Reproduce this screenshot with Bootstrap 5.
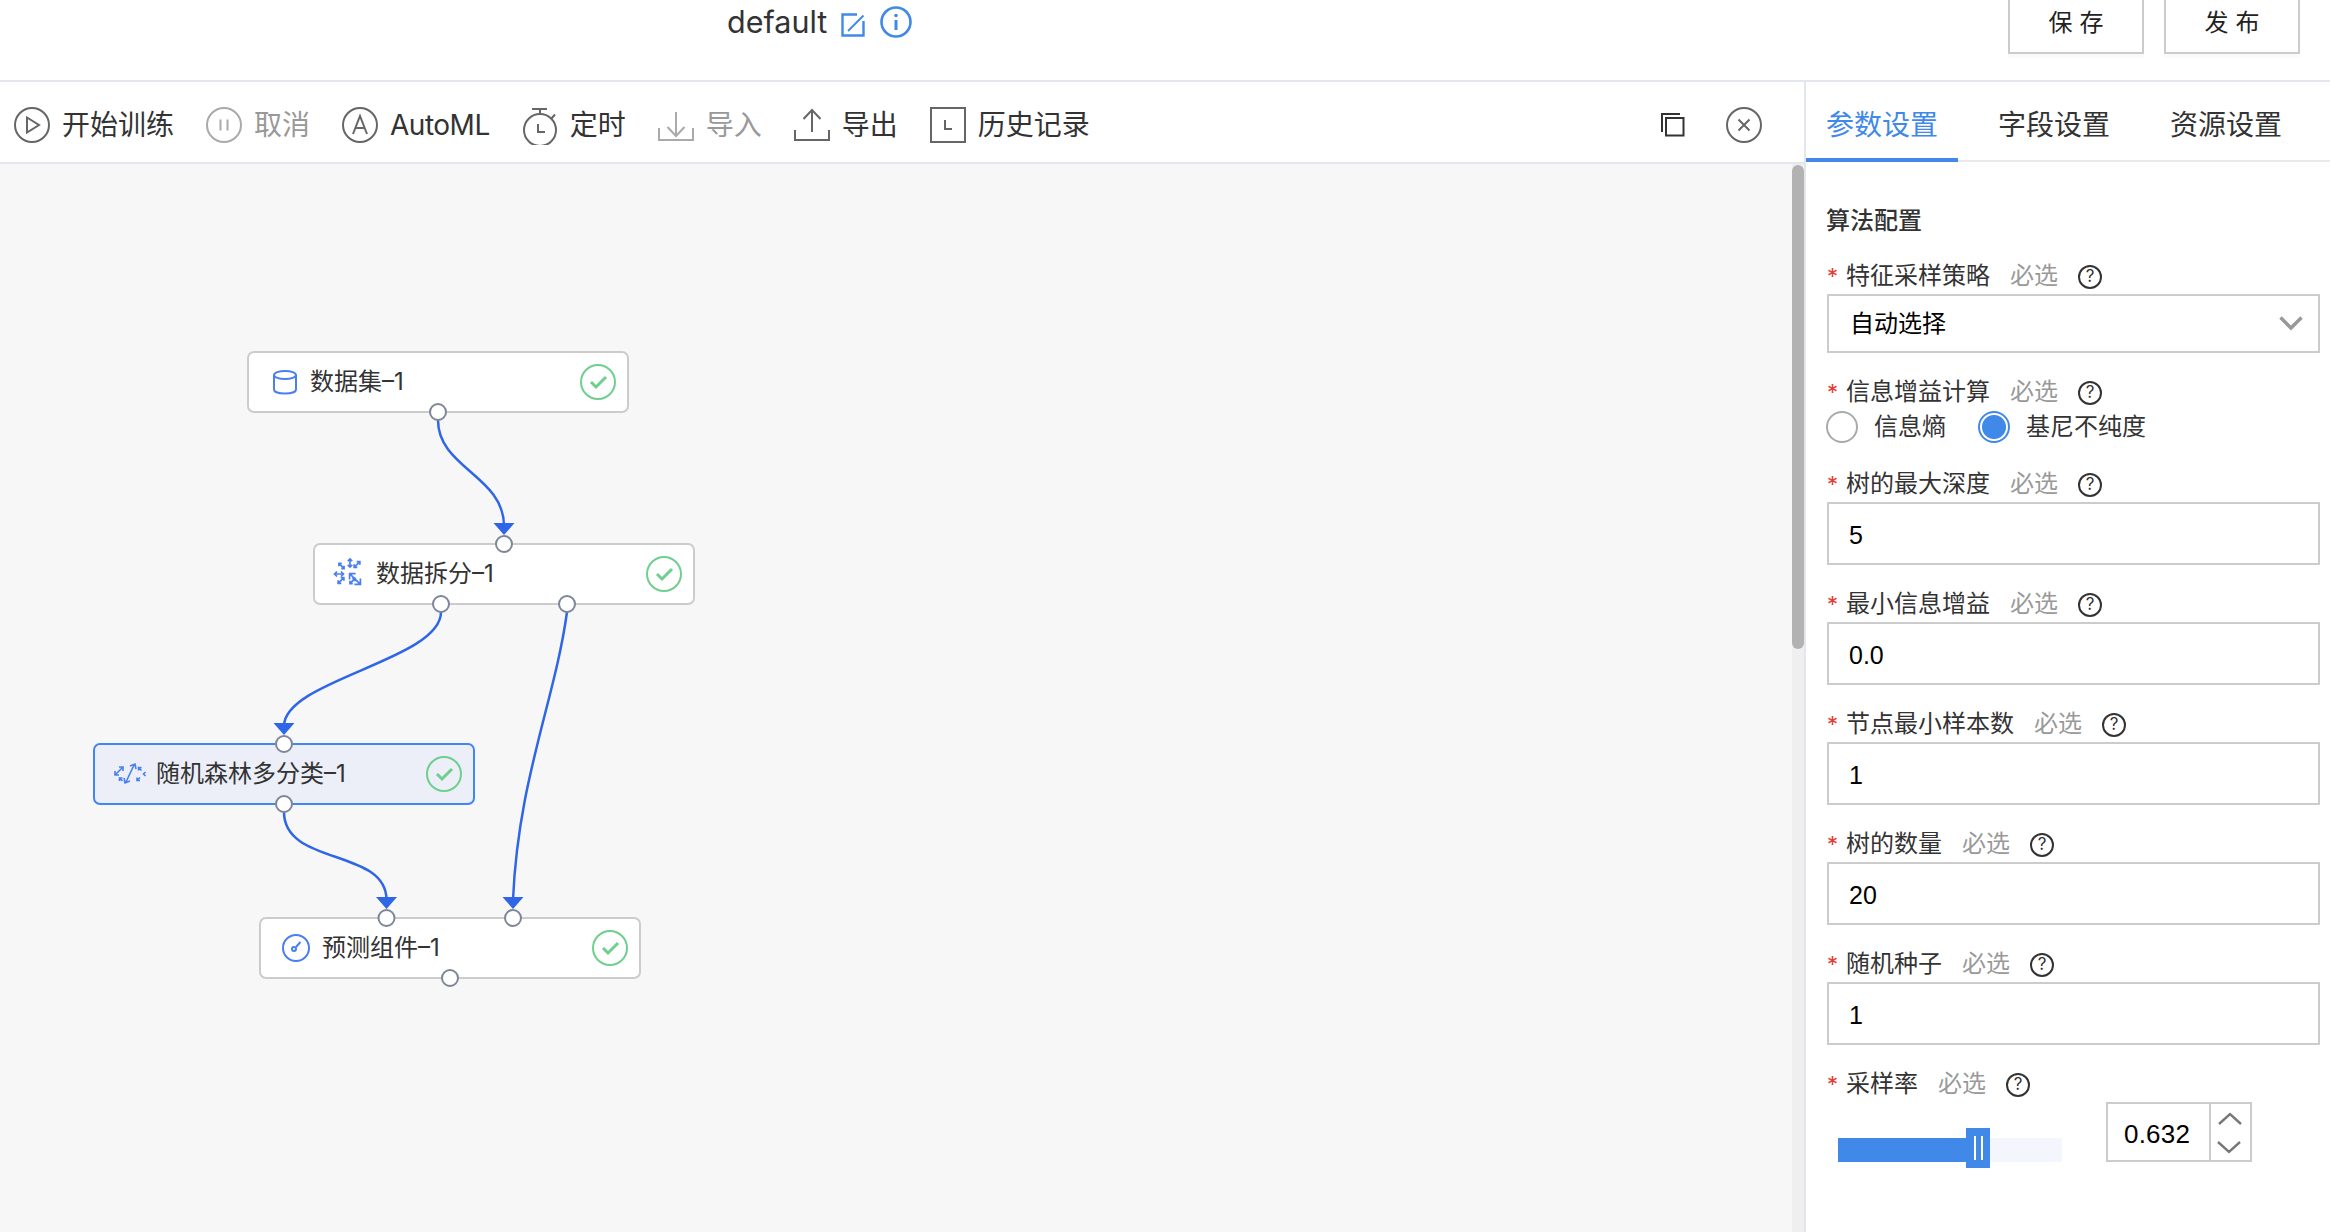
<!DOCTYPE html>
<html lang="zh">
<head>
<meta charset="utf-8">
<title>default</title>
<link href="https://cdn.jsdelivr.net/npm/bootstrap@5.3.0/dist/css/bootstrap.min.css" rel="stylesheet">
<style>
html,body{height:1232px;overflow:hidden;background:#fff}
body{font-family:Inter,"Noto Sans CJK SC",sans-serif;color:#333;font-size:24px}
.top-head{height:82px;border-bottom:2px solid #e3e6ec;padding:0 30px 0 727px;overflow:hidden}
.doc-name{font-size:30.5px;line-height:44px;margin-right:14px}
.head-ic-edit{margin-top:13px;margin-right:15px}
.head-ic-info{margin-top:6px}
.head-btns{gap:20px}
.pub-btn{width:136px;height:62px;margin-top:-8px;border:2px solid #ccc;border-radius:0;background:#fff;color:#222;font-size:24px;letter-spacing:7px;padding:0 0 4px 7px;box-shadow:0 4px 0 #fafafa;font-family:"Noto Sans CJK SC",sans-serif}
.work-row{height:1150px}
.left-col{width:1804px}
.tool-bar{height:82px;border-bottom:2px solid #e3e6ec;padding:5px 42px 0 14px;gap:32px;font-size:28px;line-height:40px}
.tool-item{gap:12px;color:#333;white-space:nowrap}
.tool-item.off{color:#999}
.tool-latin{letter-spacing:-.5px}
.tool-right{gap:41px}
.tool-ic{fill:none;stroke:#666;stroke-width:2}
.tool-item.off .tool-ic{stroke:#aaa}
.graph-area{position:relative;height:1068px;background:#f7f7f7;overflow:hidden}
.graph-svg{position:absolute;left:0;top:0;z-index:2}
.flow-node{position:absolute;width:382px;height:62px;background:#fff;border:2px solid #ccc;border-radius:7px;padding:0 11px 0 18px;font-size:24px;line-height:36px}
.flow-node.picked{background:#eceff8;border-color:#4285f4}
.flow-node .slot-ic{width:36px;height:36px;margin-right:7px;flex:none}
.node-1{left:247px;top:187px}
.node-2{left:313px;top:379px}
.node-3{left:93px;top:579px}
.node-4{left:259px;top:753px}
.sb-track{position:absolute;right:0;top:0;width:12px;height:100%;background:#efefef;z-index:3}
.sb-thumb{position:absolute;right:0;top:1px;width:12px;height:484px;background:#b2b2b2;border-radius:6px;z-index:4}
.side-col{width:526px;border-left:2px solid #e3e6ec}
.tab-line{height:80px;border-bottom:2px solid #e9eaee;gap:20px;flex-wrap:nowrap}
.tab-line .nav-link{width:152px;height:80px;padding:0 0 0 20px;font-size:28px;line-height:86px;color:#333;white-space:nowrap;border-radius:0}
.tab-line .nav-link.active{color:#4189e8;border-bottom:4px solid #4189e8}
.form-pane{padding:41px 10px 0 20px}
.sec-title{font-weight:500;height:36px;line-height:36px;margin-bottom:19px}
.fld{margin-bottom:21px}
.fld-label{height:36px;line-height:36px;white-space:nowrap;padding-left:1px}
.req-star{display:inline-block;width:19px;color:#e53935;font-size:22px}
.req-hint{color:#999;margin-left:20px}
.help-ring{display:inline-flex;align-items:center;justify-content:center;width:24px;height:24px;border:2px solid #333;border-radius:50%;font-size:17px;line-height:1;margin-left:20px;vertical-align:2px}
.fld .form-control,.fld .form-select{border:2px solid #ccc;border-radius:0;font-size:25px;color:#000;height:63px;padding:4px 20px 0;margin-left:1px;width:calc(100% - 1px);font-family:"Liberation Sans","Noto Sans CJK SC",sans-serif;box-shadow:none}
.fld .form-select{height:59px;font-size:24px;padding:0 20px 4px 21px;font-family:"Noto Sans CJK SC",sans-serif;background-image:url("data:image/svg+xml,%3csvg xmlns='http://www.w3.org/2000/svg' viewBox='0 0 24 15'%3e%3cpath fill='none' stroke='%23999' stroke-width='3.5' d='M1.5 1.5L12 12L22.5 1.5'/%3e%3c/svg%3e");background-size:24px 15px;background-position:right 15px center}
.radio-row{height:33px;margin-bottom:23px;line-height:33px;gap:0}
.radio-row .form-check-input{width:32px;height:32px;margin:0;border:2px solid #aaa;box-shadow:none;flex:none}
.radio-row .form-check-input:checked{background-color:#fff;border-color:#4189e8;background-image:radial-gradient(circle,#4189e8 0,#4189e8 11.5px,#fff 12.5px)}
.radio-text{margin:0 32px 0 16px;line-height:33px}
.rate-row{height:60px}
.rate-track{position:relative;width:224px;height:24px;margin:36px 44px 0 12px;border-radius:0;background:#f3f7fd;overflow:visible}
.rate-track .progress-bar{background:#4189e8}
.rate-grip{position:absolute;left:128px;top:-10px;width:24px;height:40px;background:#4189e8}
.rate-grip i{position:absolute;top:8px;width:2px;height:24px;background:#fff}
.rate-box{width:146px;height:60px;border:2px solid #ccc}
.rate-val{width:103px;border-right:2px solid #ccc;font-family:"Liberation Sans",sans-serif;font-size:26px;letter-spacing:.2px;color:#000;padding-left:16px;line-height:60px}
.rate-step{flex:1;position:relative}
</style>
</head>
<body>
<header class="top-head d-flex align-items-start">
  <span class="doc-name">default</span>
  <svg class="head-ic-edit" width="24" height="24" viewBox="0 0 24 24" fill="none" stroke="#4189e8" stroke-width="2.4"><path d="M16 1.500H1.500V22.500H22.500V8"/><path d="M7 18L22.500 2.500" stroke-width="2"/></svg>
  <svg class="head-ic-info" width="32" height="32" viewBox="0 0 32 32" fill="none" stroke="#4189e8" stroke-width="2.6"><circle cx="16" cy="16" r="14.500"/><path d="M16 14V24" stroke-width="3"/><circle cx="16" cy="9.500" r="1.800" fill="#4189e8" stroke="none"/></svg>
  <div class="head-btns ms-auto d-flex">
    <button type="button" class="btn pub-btn">保存</button>
    <button type="button" class="btn pub-btn">发布</button>
  </div>
</header>
<div class="work-row d-flex">
  <div class="left-col d-flex flex-column">
    <div class="tool-bar d-flex align-items-center">
      <div class="tool-item d-flex align-items-center"><svg class="tool-ic" width="36" height="40" viewBox="0 0 36 40"><circle cx="18" cy="20" r="17"/><path d="M13 12.500L25 20L13 27.500Z"/></svg><span>开始训练</span></div>
      <div class="tool-item off d-flex align-items-center"><svg class="tool-ic" width="36" height="40" viewBox="0 0 36 40"><circle cx="18" cy="20" r="17"/><path d="M14.500 14.500V25.500M21.500 14.500V25.500"/></svg><span>取消</span></div>
      <div class="tool-item d-flex align-items-center"><svg class="tool-ic" width="36" height="40" viewBox="0 0 36 40"><circle cx="18" cy="20" r="17"/><path d="M11 29L18 11L25 29M13.500 23H22.500"/></svg><span class="tool-latin">AutoML</span></div>
      <div class="tool-item d-flex align-items-center"><svg class="tool-ic" width="36" height="40" viewBox="0 0 36 40"><circle cx="18" cy="25" r="16"/><path d="M10 4H25M18 4V9M29 14L33 9.500M16 19V27H23"/></svg><span>定时</span></div>
      <div class="tool-item off d-flex align-items-center"><svg class="tool-ic" width="36" height="40" viewBox="0 0 36 40"><path d="M1 23V35H35V23M18 7V31M9.500 22L18 31L26.500 22"/></svg><span>导入</span></div>
      <div class="tool-item d-flex align-items-center"><svg class="tool-ic" width="36" height="40" viewBox="0 0 36 40"><path d="M1 25V35H35V25M18 27V5M9.500 14L18 5L26.500 14"/></svg><span>导出</span></div>
      <div class="tool-item d-flex align-items-center"><svg class="tool-ic" width="36" height="40" viewBox="0 0 36 40"><rect x="1" y="3" width="34" height="34"/><path d="M15 15V24H22"/></svg><span>历史记录</span></div>
      <div class="tool-right ms-auto d-flex align-items-center">
        <svg width="25" height="25" viewBox="0 0 25 25" fill="none" stroke="#333" stroke-width="2"><path d="M2 20V2H20"/><rect x="6" y="6" width="17.500" height="17.500"/></svg>
        <svg class="tool-ic" width="36" height="40" viewBox="0 0 36 40"><circle cx="18" cy="20" r="17"/><path d="M12.500 14.500L23.500 25.500M23.500 14.500L12.500 25.500"/></svg>
      </div>
    </div>
    <div class="graph-area">
      <div class="flow-node node-1 d-flex align-items-center">
        <svg class="slot-ic" viewBox="0 0 36 36" fill="none" stroke="#4a7ff0" stroke-width="2"><ellipse cx="18" cy="11" rx="11" ry="4"/><path d="M7 11V25.500C7 28 12 29.500 18 29.500S29 28 29 25.500V11"/></svg>
        <span>数据集–1</span>
        <svg class="ms-auto" width="36" height="36" viewBox="0 0 36 36" fill="none" stroke="#6fcf8e" stroke-width="2"><circle cx="18" cy="18" r="17"/><path d="M11 18L16 23L26 13" stroke-width="3"/></svg>
      </div>
      <div class="flow-node node-2 d-flex align-items-center">
        <svg class="slot-ic" viewBox="0 0 36 36" fill="none" stroke="#4a7ff0" stroke-width="1.700">
          <defs><path id="dbl" vector-effect="non-scaling-stroke" d="M-4.500 0H4.500M-2 -2.500L-4.500 0L-2 2.500M2 -2.500L4.500 0L2 2.500"/></defs>
          <use href="#dbl" transform="translate(8.500 10) rotate(45) scale(.8)"/>
          <use href="#dbl" transform="translate(17 7) rotate(90) scale(.9)"/>
          <use href="#dbl" transform="translate(24 8.500) rotate(-45) scale(.9)"/>
          <use href="#dbl" transform="translate(6 18) scale(1)"/>
          <use href="#dbl" transform="translate(8 24.500) rotate(-45) scale(.9)"/>
          <use href="#dbl" transform="translate(22 23) rotate(45) scale(1.700)"/>
          <use href="#dbl" transform="translate(19.500 25) rotate(-45) scale(.8)"/>
        </svg>
        <span>数据拆分–1</span>
        <svg class="ms-auto" width="36" height="36" viewBox="0 0 36 36" fill="none" stroke="#6fcf8e" stroke-width="2"><circle cx="18" cy="18" r="17"/><path d="M11 18L16 23L26 13" stroke-width="3"/></svg>
      </div>
      <div class="flow-node node-3 picked d-flex align-items-center">
        <svg class="slot-ic" viewBox="0 0 36 36" fill="none" stroke="#4a7ff0" stroke-width="1.600">
          <path d="M2 19L10 11M6 11H10V15M2 15V19H6"/>
          <path d="M13 26L21 9M17 10L22 8L23 13M11 22L12 27L17 25"/>
          <path d="M6.500 22L9.500 25M6.500 25V22H9.500"/>
          <path d="M25.500 11.500L28.500 14.500M25.500 14.500V11.500H28.500"/>
          <path d="M24 24.500L27 21.500M24 21.500V24.500H27"/>
          <path d="M32.500 16L30.500 18L32.500 20"/>
        </svg>
        <span>随机森林多分类–1</span>
        <svg class="ms-auto" width="36" height="36" viewBox="0 0 36 36" fill="none" stroke="#6fcf8e" stroke-width="2"><circle cx="18" cy="18" r="17"/><path d="M11 18L16 23L26 13" stroke-width="3"/></svg>
      </div>
      <div class="flow-node node-4 d-flex align-items-center">
        <svg class="slot-ic" viewBox="0 0 36 36" fill="none" stroke="#4a7ff0" stroke-width="2"><circle cx="17" cy="18" r="13"/><circle cx="15" cy="19" r="2"/><path d="M17 17L21.500 12"/></svg>
        <span>预测组件–1</span>
        <svg class="ms-auto" width="36" height="36" viewBox="0 0 36 36" fill="none" stroke="#6fcf8e" stroke-width="2"><circle cx="18" cy="18" r="17"/><path d="M11 18L16 23L26 13" stroke-width="3"/></svg>
      </div>
      <svg class="graph-svg" width="1804" height="1068" viewBox="0 164 1804 1068">
        <g fill="none" stroke="#2f66e8" stroke-width="2.500">
          <path d="M438 420C438 468 504 476 504 526"/>
          <path d="M441 612C441 660 284 680 284 726"/>
          <path d="M567 612C555 700 518 780 513 900"/>
          <path d="M284 812C284 866 386.500 848 386.500 900"/>
        </g>
        <g fill="#2f66e8">
          <path d="M493.500 523H514.500L504 535Z"/>
          <path d="M273.500 723H294.500L284 735Z"/>
          <path d="M376 897H397L386.500 909Z"/>
          <path d="M502.500 897H523.500L513 909Z"/>
        </g>
        <g fill="#fff" stroke="#7d8797" stroke-width="2">
          <circle cx="438" cy="412" r="8"/>
          <circle cx="504" cy="544" r="8"/>
          <circle cx="441" cy="604" r="8"/>
          <circle cx="567" cy="604" r="8"/>
          <circle cx="284" cy="744" r="8"/>
          <circle cx="284" cy="804" r="8"/>
          <circle cx="386.500" cy="918" r="8"/>
          <circle cx="513" cy="918" r="8"/>
          <circle cx="450" cy="978" r="8"/>
        </g>
      </svg>
      <div class="sb-track"></div>
      <div class="sb-thumb"></div>
    </div>
  </div>
  <aside class="side-col">
    <ul class="nav tab-line">
      <li class="nav-item"><a class="nav-link active" href="#">参数设置</a></li>
      <li class="nav-item"><a class="nav-link" href="#">字段设置</a></li>
      <li class="nav-item"><a class="nav-link" href="#">资源设置</a></li>
    </ul>
    <form class="form-pane">
      <div class="sec-title">算法配置</div>
      <div class="fld">
        <div class="fld-label"><span class="req-star">*</span>特征采样策略<span class="req-hint">必选</span><span class="help-ring">?</span></div>
        <select class="form-select"><option>自动选择</option></select>
      </div>
      <div class="fld">
        <div class="fld-label"><span class="req-star">*</span>信息增益计算<span class="req-hint">必选</span><span class="help-ring">?</span></div>
        <div class="radio-row d-flex align-items-center">
          <input class="form-check-input" type="radio" name="gain"><label class="radio-text">信息熵</label>
          <input class="form-check-input" type="radio" name="gain" checked><label class="radio-text">基尼不纯度</label>
        </div>
      </div>
      <div class="fld">
        <div class="fld-label"><span class="req-star">*</span>树的最大深度<span class="req-hint">必选</span><span class="help-ring">?</span></div>
        <input class="form-control" value="5">
      </div>
      <div class="fld">
        <div class="fld-label"><span class="req-star">*</span>最小信息增益<span class="req-hint">必选</span><span class="help-ring">?</span></div>
        <input class="form-control" value="0.0">
      </div>
      <div class="fld">
        <div class="fld-label"><span class="req-star">*</span>节点最小样本数<span class="req-hint">必选</span><span class="help-ring">?</span></div>
        <input class="form-control" value="1">
      </div>
      <div class="fld">
        <div class="fld-label"><span class="req-star">*</span>树的数量<span class="req-hint">必选</span><span class="help-ring">?</span></div>
        <input class="form-control" value="20">
      </div>
      <div class="fld">
        <div class="fld-label"><span class="req-star">*</span>随机种子<span class="req-hint">必选</span><span class="help-ring">?</span></div>
        <input class="form-control" value="1">
      </div>
      <div class="fld">
        <div class="fld-label"><span class="req-star">*</span>采样率<span class="req-hint">必选</span><span class="help-ring">?</span></div>
        <div class="rate-row d-flex">
          <div class="progress rate-track">
            <div class="progress-bar" style="width:62.5%"></div>
            <div class="rate-grip"><i style="left:8px"></i><i style="left:15px"></i></div>
          </div>
          <div class="rate-box d-flex">
            <div class="rate-val">0.632</div>
            <div class="rate-step">
              <svg width="39" height="56" viewBox="0 0 39 56" fill="none" stroke="#777" stroke-width="2.400"><path d="M8 20L19 10L30 20M7 38L18 48L29 38"/></svg>
            </div>
          </div>
        </div>
      </div>
    </form>
  </aside>
</div>
</body>
</html>
